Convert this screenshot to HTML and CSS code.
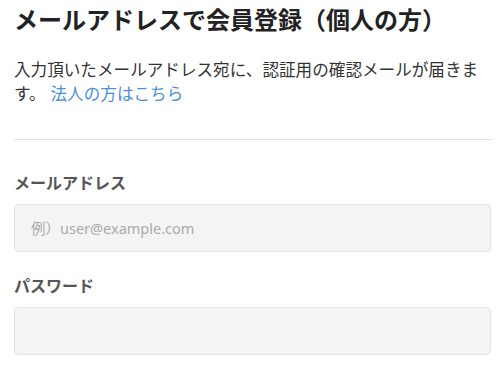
FILE: index.html
```html
<!DOCTYPE html>
<html lang="ja">
<head>
<meta charset="UTF-8">
<meta name="viewport" content="width=device-width, initial-scale=1.0">
<title>会員登録</title>
<link rel="stylesheet" href="styles.css">
</head>
<body>

<div class="signup">
    <h1 class="signup-title">メールアドレスで会員登録（個人の方）</h1>

    <p class="signup-lead">入力頂いたメールアドレス宛に、認証用の確認メールが届きます。<a href="#" class="signup-link">法人の方はこちら</a></p>

    <hr class="signup-divider">

    <form class="signup-form">
        <div class="field">
            <label class="field-label" for="email">メールアドレス</label>
            <input class="field-input" type="email" id="email" placeholder="例）user@example.com">
        </div>
        <div class="field">
            <label class="field-label" for="password">パスワード</label>
            <input class="field-input" type="password" id="password">
        </div>
    </form>
</div>

</body>
</html>
```

FILE: styles.css
```css
body {
    margin: 0;
    background-color: #ffffff;
    color: #333333;
    font-family: 'Noto Sans CJK JP', 'Noto Sans', sans-serif;
}

.signup {
    width: 478px;
    padding: 0 6px 0 14px;
}

.signup-title {
    margin: 0;
    padding-top: 5px;
    font-size: 24px;
    line-height: 28px;
    font-weight: 700;
    color: #222222;
}

.signup-lead {
    margin: 24px 0 0;
    font-size: 16.6px;
    line-height: 24px;
    color: #333333;
}

.signup-link {
    margin-left: 5px;
    color: #4a8fdc;
    text-decoration: none;
}

.signup-divider {
    margin: 34px 0 0;
    border: none;
    border-top: 1px solid #e3e3e3;
}

.signup-form {
    padding-top: 32px;
}

.field {
    margin-bottom: 23px;
}

.field-label {
    display: block;
    font-size: 16px;
    line-height: 20px;
    font-weight: 700;
    color: #555555;
    margin-bottom: 12px;
}

.field-input {
    box-sizing: border-box;
    display: block;
    width: 477px;
    height: 48px;
    padding: 0 16px;
    border: 1px solid #e4e4e4;
    border-radius: 4px;
    background-color: #f4f4f4;
    font-family: 'Noto Sans', 'Noto Sans CJK JP', sans-serif;
    font-size: 14.5px;
    color: #333333;
    outline: none;
}

.field-input::placeholder {
    color: #aaaaaa;
}
```
